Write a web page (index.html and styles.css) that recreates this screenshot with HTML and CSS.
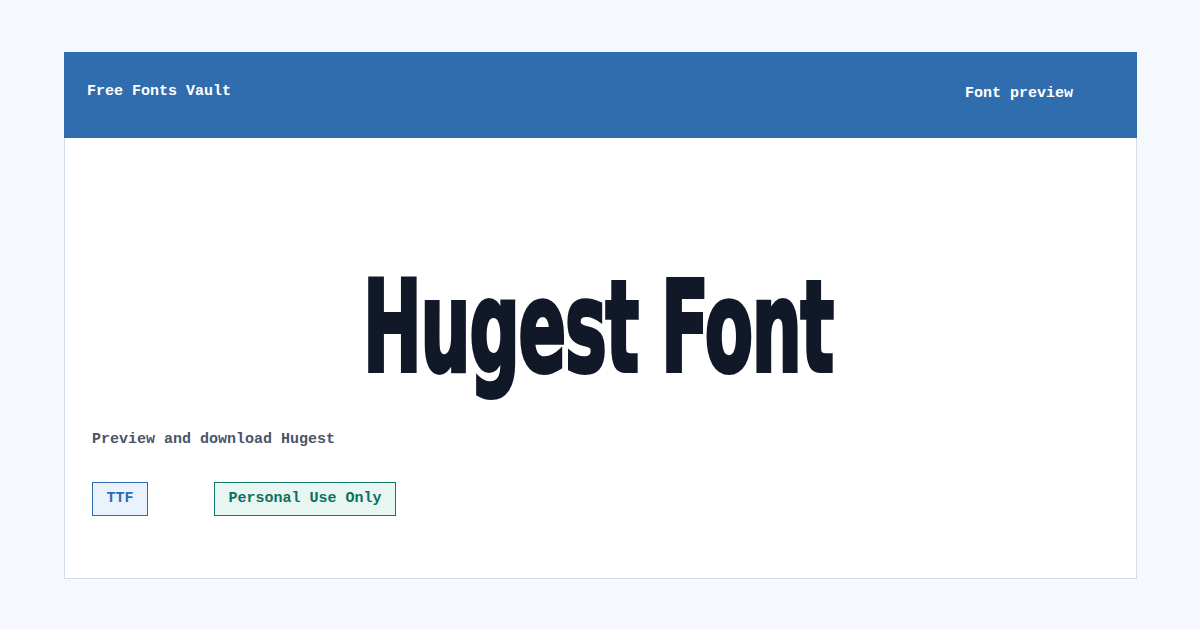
FILE: index.html
```html
<!DOCTYPE html>
<html lang="en">

<head>
    <meta charset="UTF-8">
    <title>Hugest Font - Free Fonts Vault</title>
    <meta name="viewport" content="width=device-width, initial-scale=1.0">
    <link rel="stylesheet" href="styles.css">
</head>

<body>
    <div class="card">
        <header class="topbar">
            <span class="brand">Free Fonts Vault</span>
            <span class="crumb">Font preview</span>
        </header>

        <main class="content">
            <div class="specimen">
                <h1>Hugest Font</h1>
            </div>
            <p class="tagline">Preview and download Hugest</p>
            <div class="badges">
                <span class="badge badge-format">TTF</span>
                <span class="badge badge-license">Personal Use Only</span>
            </div>
        </main>
    </div>
</body>
</html>
```

FILE: styles.css
```css
/* Fondo de la página y quitar márgenes por defecto */
body, html {
margin: 0;
padding: 0;
height: 100%;
}

body {
background-color: #f5f9fd;
font-family: "Liberation Mono", "DejaVu Sans Mono", monospace;
font-size: 15px;
font-weight: bold;
line-height: 18px;
padding: 52px 63px 0 64px;
box-sizing: border-box;
}

/* Tarjeta principal */
.card {
background-color: #fff;
border: 1px solid #d3dde9;
border-top: none;
height: 527px;
box-sizing: border-box;
display: flex;
flex-direction: column;
}

/* Barra superior */
.topbar {
background-color: #2f6dae;
color: #fff;
height: 86px;
margin: 0 -1px;
display: flex;
justify-content: space-between;
align-items: center;
padding: 0 64px 0 23px;
}

.brand {
margin-top: -6px;
}

.crumb {
margin-top: -2px;
}

/* Contenido */
.content {
padding: 0 27px;
}

.specimen {
display: flex;
justify-content: center;
margin-top: 125px;
}

h1 {
margin: 0;
font-family: "DejaVu Sans Condensed", "DejaVu Sans", sans-serif;
font-weight: bold;
font-size: 126px;
line-height: 130px;
color: #111827;
letter-spacing: -2px;
transform: translateX(-3px) scaleX(0.62);
-webkit-text-stroke: 4px #111827;
}

.tagline {
margin: 38px 0 0 0;
color: #4a5568;
}

.badges {
display: flex;
gap: 66px;
margin-top: 33px;
}

.badge {
display: inline-block;
padding: 7px 13.5px;
line-height: 18px;
border: 1px solid;
}

.badge-format {
color: #2f6dae;
border-color: #2f6dae;
background-color: #eaf2fd;
}

.badge-license {
color: #0f6e5e;
border-color: #127a68;
background-color: #e7f6f1;
}
```
